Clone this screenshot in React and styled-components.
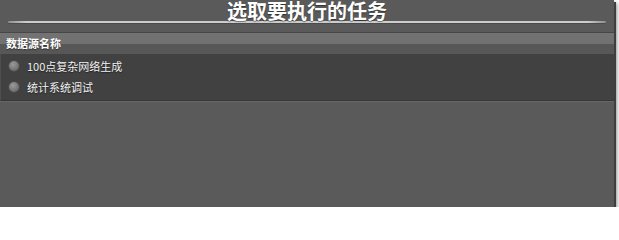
import React from "react";
import styled, { createGlobalStyle } from "styled-components";

const Global = createGlobalStyle`
  html, body { margin: 0; padding: 0; background: #ffffff; }
  body { font-family: "Noto Sans CJK SC", "Noto Sans", sans-serif; }
`;

const Frame = styled.div`
  width: 614px;
  height: 207px;
  background: #5a5a5a;
  box-shadow: 2px 2px 0 #3e3e3e, 3px 3px 4px rgba(0, 0, 0, 0.45);
  overflow: hidden;
`;

const Title = styled.h1`
  margin: 0;
  padding-top: 1px;
  font-size: 20px;
  line-height: 20px;
  font-weight: 700;
  color: #ffffff;
  text-align: center;
  text-shadow: 0 1px 1px rgba(0, 0, 0, 0.45);
`;

const Rule = styled.div`
  height: 2px;
  margin: 0 8px;
  border-radius: 2px;
  background: linear-gradient(90deg, #8c8c8c, #cdcdcd 3%, #cdcdcd 97%, #8c8c8c);
  box-shadow: 0 1px 0 #4c4c4c;
`;

const Panel = styled.section`
  margin-top: 9px;
  border-top: 1px solid #474747;
`;

const Header = styled.div`
  height: 21px;
  line-height: 21px;
  padding-left: 6px;
  font-size: 11px;
  font-weight: 700;
  color: #ffffff;
  text-shadow: 0 1px 1px rgba(0, 0, 0, 0.5);
  background: linear-gradient(#737373 0, #717171 50%, #575757 50%, #575757 100%);
`;

const List = styled.ul`
  margin: 0;
  padding: 1px 0 3px;
  list-style: none;
  background: #414141;
  border-left: 1px solid #4e4e4e;
  border-bottom: 1px solid #363636;
  box-shadow: 0 1px 0 #676767;
`;

const Item = styled.li`
  display: flex;
  align-items: center;
  gap: 8px;
  height: 21px;
  padding-left: 8px;
  font-size: 11px;
  color: #f2f2f2;
  text-shadow: 0 1px 1px rgba(0, 0, 0, 0.5);
`;

const Radio = styled.span`
  width: 10px;
  height: 10px;
  border-radius: 50%;
  background: radial-gradient(circle at 40% 35%, #9a9a9a, #757575 60%, #5e5e5e);
  box-shadow: 0 0 0 1px #4a4a4a;
  flex: none;
`;

const tasks = ["100点复杂网络生成", "统计系统调试"];

export default function App() {
  return (
    <>
      <Global />
      <Frame>
        <Title>选取要执行的任务</Title>
        <Rule />
        <Panel>
          <Header>数据源名称</Header>
          <List>
            {tasks.map((t) => (
              <Item key={t}>
                <Radio />
                {t}
              </Item>
            ))}
          </List>
        </Panel>
      </Frame>
    </>
  );
}
